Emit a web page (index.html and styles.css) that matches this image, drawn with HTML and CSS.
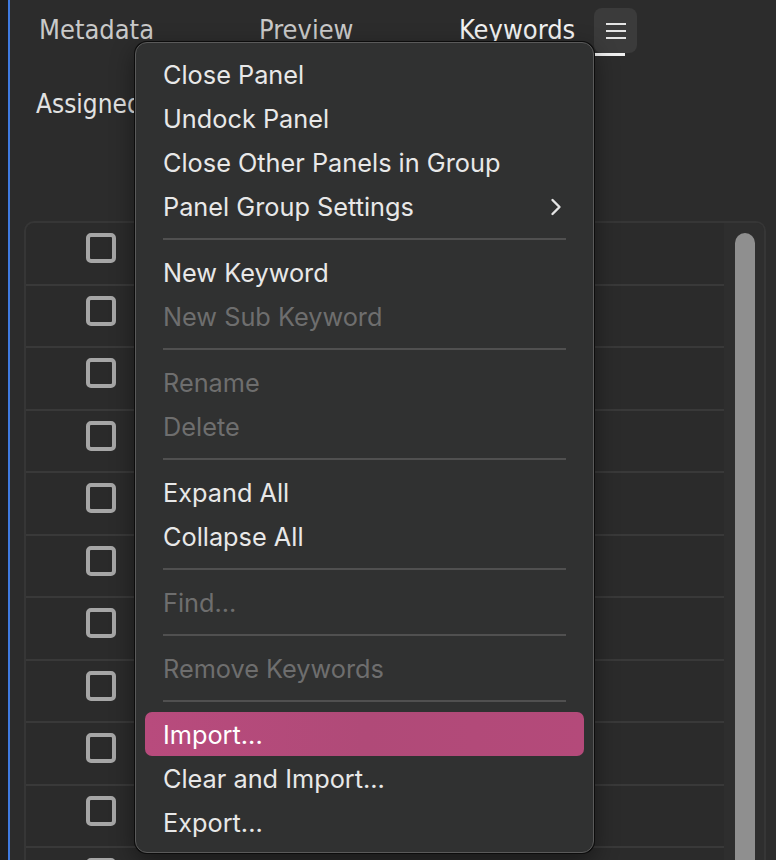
FILE: index.html
```html
<!DOCTYPE html>
<html>
<head>
<meta charset="utf-8">
<link rel="stylesheet" href="styles.css">
</head>
<body>
<div class="app">
  <div class="gutter"></div>
  <div class="accent"></div>
  <div class="panel">
    <div class="tabs">
      <div class="tab tab-meta">Metadata</div>
      <div class="tab tab-preview">Preview</div>
      <div class="tab tab-active">
        <span class="tab-label">Keywords</span>
        <span class="menu-btn">
          <svg width="20" height="18" viewBox="0 0 20 18"><path d="M0 2h20M0 9h20M0 16h20" stroke="#e4e4e4" stroke-width="2"/></svg>
        </span>
      </div>
    </div>
    <div class="assigned">Assigned</div>
    <div class="list">
      <div class="rows">
        <div class="row"><span class="cb"></span></div>
        <div class="row"><span class="cb"></span></div>
        <div class="row"><span class="cb"></span></div>
        <div class="row"><span class="cb"></span></div>
        <div class="row"><span class="cb"></span></div>
        <div class="row"><span class="cb"></span></div>
        <div class="row"><span class="cb"></span></div>
        <div class="row"><span class="cb"></span></div>
        <div class="row"><span class="cb"></span></div>
        <div class="row"><span class="cb"></span></div>
        <div class="row"><span class="cb"></span></div>
      </div>
      <div class="scroll"><div class="thumb"></div></div>
    </div>
  </div>
</div>

<div class="menu">
  <div class="item">Close Panel</div>
  <div class="item">Undock Panel</div>
  <div class="item">Close Other Panels in Group</div>
  <div class="item has-sub">Panel Group Settings
    <svg class="chev" width="12" height="18" viewBox="0 0 12 18"><path d="M2.5 2l7 7-7 7" fill="none" stroke="#e4e4e4" stroke-width="2.4" stroke-linecap="round" stroke-linejoin="round"/></svg>
  </div>
  <div class="sep"></div>
  <div class="item">New Keyword</div>
  <div class="item disabled">New Sub Keyword</div>
  <div class="sep"></div>
  <div class="item disabled">Rename</div>
  <div class="item disabled">Delete</div>
  <div class="sep"></div>
  <div class="item">Expand All</div>
  <div class="item">Collapse All</div>
  <div class="sep"></div>
  <div class="item disabled">Find...</div>
  <div class="sep"></div>
  <div class="item disabled">Remove Keywords</div>
  <div class="sep"></div>
  <div class="item active">Import...</div>
  <div class="item">Clear and Import...</div>
  <div class="item">Export...</div>
</div>
</body>
</html>
```

FILE: styles.css
```css
* { box-sizing: border-box; }
html, body { margin: 0; padding: 0; }
body {
  width: 776px;
  height: 860px;
  overflow: hidden;
  background: #1e1e1e;
  position: relative;
}
.app {
  display: flex;
  height: 860px;
  overflow: hidden;
}
.gutter { width: 8px; background: #1e1e1e; }
.accent { width: 2px; background: #3f7be0; }
.panel {
  flex: 1;
  background: #2c2c2c;
  display: flex;
  flex-direction: column;
  overflow: hidden;
  font-family: "DejaVu Sans Condensed", "DejaVu Sans", sans-serif;
  font-stretch: condensed;
}
.tabs {
  height: 55px;
  flex: none;
  display: flex;
  align-items: stretch;
  padding-left: 29px;
}
.tab {
  font-size: 27px;
  color: #c9c9c9;
  line-height: 1;
  padding-top: 16px;
}
.tab-meta { width: 220px; }
.tab-preview { width: 200px; }
.tab-active {
  display: flex;
  align-items: flex-start;
  color: #f2f2f2;
  border-bottom: 3px solid #f0f0f0;
  padding-top: 0;
  width: 166px;
  height: 56px;
}
.tab-label { padding-top: 16px; width: 135px; flex: none; }
.menu-btn {
  flex: none;
  margin-top: 8px;
  width: 43px;
  height: 45px;
  border-radius: 8px;
  background: #3b3b3b;
  display: flex;
  align-items: center;
  justify-content: center;
}
.menu-btn svg { margin-top: 1px; }
.assigned {
  margin-top: 34px;
  margin-left: 26px;
  font-size: 26px;
  line-height: 30px;
  color: #e2e2e2;
  flex: none;
}
.list {
  margin-top: 102px;
  margin-left: 14px;
  width: 742px;
  flex: 1;
  border: 2px solid #363636;
  border-bottom: none;
  border-radius: 10px 10px 0 0;
  display: flex;
  background: #2b2b2b;
  overflow: hidden;
}
.rows {
  flex: 1;
  display: flex;
  flex-direction: column;
}
.row {
  height: 62.55px;
  flex: none;
  border-bottom: 2px solid #393939;
  padding-left: 60px;
  padding-top: 10px;
}
.cb {
  display: block;
  width: 30px;
  height: 30px;
  border: 4.5px solid #a6a6a6;
  border-radius: 5px;
  background: #2a2a2a;
}
.scroll {
  width: 40px;
  background: #2e2e2e;
  padding: 10px 9px 0 11px;
}
.thumb {
  height: 100%;
  background: #8f8f8f;
  border-radius: 10px 10px 0 0;
}

.menu {
  position: absolute;
  left: 135px;
  top: 42px;
  width: 459px;
  height: 811px;
  background: #303131;
  border: 1px solid #5a5a5a;
  border-radius: 12px;
  box-shadow: 0 0 0 1px #0c0c0c, 0 8px 24px rgba(0,0,0,0.45);
  padding: 9px 9px 0 9px;
  font-family: "Inter", "Liberation Sans", sans-serif;
}
.item {
  height: 44px;
  display: flex;
  align-items: center;
  padding-left: 18px;
  padding-right: 22px;
  font-size: 25.3px;
  color: #e8e8e8;
  border-radius: 7px;
}
.item.disabled { color: #6e6e6e; }
.item.active {
  background: linear-gradient(90deg, #b84b7d, #b04a78 50%, #b44a7a);
  color: #ffffff;
}
.has-sub { justify-content: space-between; }
.chev { margin-top: 1px; }
.sep {
  height: 22px;
  padding: 10px 18px 0 18px;
}
.sep::before {
  content: "";
  display: block;
  height: 2px;
  background: #505050;
}
```
